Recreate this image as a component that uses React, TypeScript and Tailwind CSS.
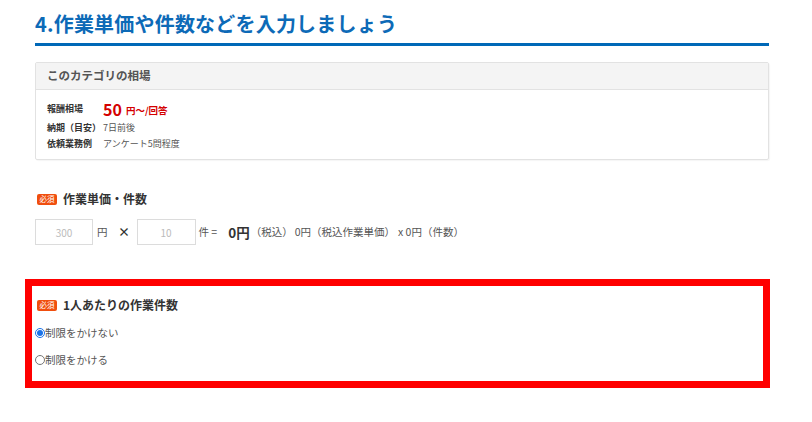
import { useState } from 'react';

const font = { fontFamily: '"Noto Sans CJK JP", "Noto Sans", sans-serif' };

const RequiredBadge = () => (
  <span className="inline-flex items-center justify-center w-[20px] h-[11px] rounded-[2px] bg-[#f04e0e] text-white text-[7.5px] leading-none ml-[2px] shrink-0">
    必須
  </span>
);

const App = () => {
  const [limit, setLimit] = useState<'none' | 'limit'>('none');

  return (
    <div className="w-[812px] h-[422px] bg-white text-[#333]" style={font}>
      <div className="pl-[35px] pr-[43px]">
        <h2 className="pt-[10px] pb-[5px] border-b-[3px] border-[#0068b7] text-[20px] leading-[28px] font-bold text-[#0d6ab7] tracking-[0.2px]">
          4.作業単価や件数などを入力しましょう
        </h2>

        <div className="mt-[16px] border border-[#e2e2e2] rounded-[2px] shadow-[1px_1px_1px_rgba(0,0,0,0.04)]">
          <div className="h-[27px] flex items-center pl-[11px] bg-[#f4f4f4] border-b border-[#e2e2e2] text-[11.5px] font-bold text-[#555]">
            このカテゴリの相場
          </div>
          <div className="pl-[11px] pt-[9px] pb-[7px] text-[9px] whitespace-nowrap">
            <div className="flex items-center h-[20px]">
              <span className="w-[56px] shrink-0 font-bold text-[#333]">報酬相場</span>
              <span className="text-[16px] font-bold text-[#d40000] leading-none">50</span>
              <span className="ml-[4px] text-[9.5px] font-bold text-[#d40000] mt-[3px]">円〜/回答</span>
            </div>
            <div className="flex items-center h-[17px]">
              <span className="w-[56px] shrink-0 font-bold text-[#333]">納期（目安）</span>
              <span className="text-[#555]">7日前後</span>
            </div>
            <div className="flex items-center h-[16px]">
              <span className="w-[56px] shrink-0 font-bold text-[#333]">依頼業務例</span>
              <span className="text-[#555]">アンケート5問程度</span>
            </div>
          </div>
        </div>

        <div className="mt-[30px] flex items-center h-[18px] gap-[6px]">
          <RequiredBadge />
          <span className="text-[12px] font-bold text-[#333]">作業単価・件数</span>
        </div>

        <div className="mt-[11px] flex items-center text-[10.5px] text-[#555] whitespace-nowrap">
          <input
            className="w-[58px] h-[26px] border border-[#dcdcdc] text-center text-[10px] text-[#999] placeholder-[#bbb] outline-none"
            placeholder="300"
          />
          <span className="ml-[4px]">円</span>
          <span className="ml-[12px] w-[9px] flex justify-center text-[12px] font-bold text-[#333]">×</span>
          <input
            className="ml-[8px] w-[59px] h-[26px] border border-[#dcdcdc] text-center text-[10px] text-[#999] placeholder-[#bbb] outline-none"
            placeholder="10"
          />
          <span className="ml-[3px]">件 =</span>
          <span className="ml-[11px] text-[13.5px] font-bold text-[#333]">0円</span>
          <span className="ml-[1px]">（税込）</span>
          <span className="ml-[2px]">0円（税込作業単価）</span>
          <span className="ml-[3px]">x 0円（件数）</span>
        </div>
      </div>

      <div className="mt-[34px] ml-[25px] w-[745px] border-[7px] border-[#ff0000] pl-[3px] pt-[10px] pb-[13px]">
        <div className="flex items-center h-[18px] gap-[6px]">
          <RequiredBadge />
          <span className="text-[12px] font-bold text-[#333]">1人あたりの作業件数</span>
        </div>
        <label className="mt-[11px] flex items-center h-[16px] text-[10.5px] text-[#555] cursor-pointer">
          <input
            type="radio"
            name="limit"
            checked={limit === 'none'}
            onChange={() => setLimit('none')}
            className="m-0 w-[10px] h-[10px] accent-[#1a73e8]"
          />
          <span>制限をかけない</span>
        </label>
        <label className="mt-[11px] flex items-center h-[16px] text-[10.5px] text-[#555] cursor-pointer">
          <input
            type="radio"
            name="limit"
            checked={limit === 'limit'}
            onChange={() => setLimit('limit')}
            className="m-0 w-[10px] h-[10px] accent-[#1a73e8]"
          />
          <span>制限をかける</span>
        </label>
      </div>
    </div>
  );
};

export default App;
